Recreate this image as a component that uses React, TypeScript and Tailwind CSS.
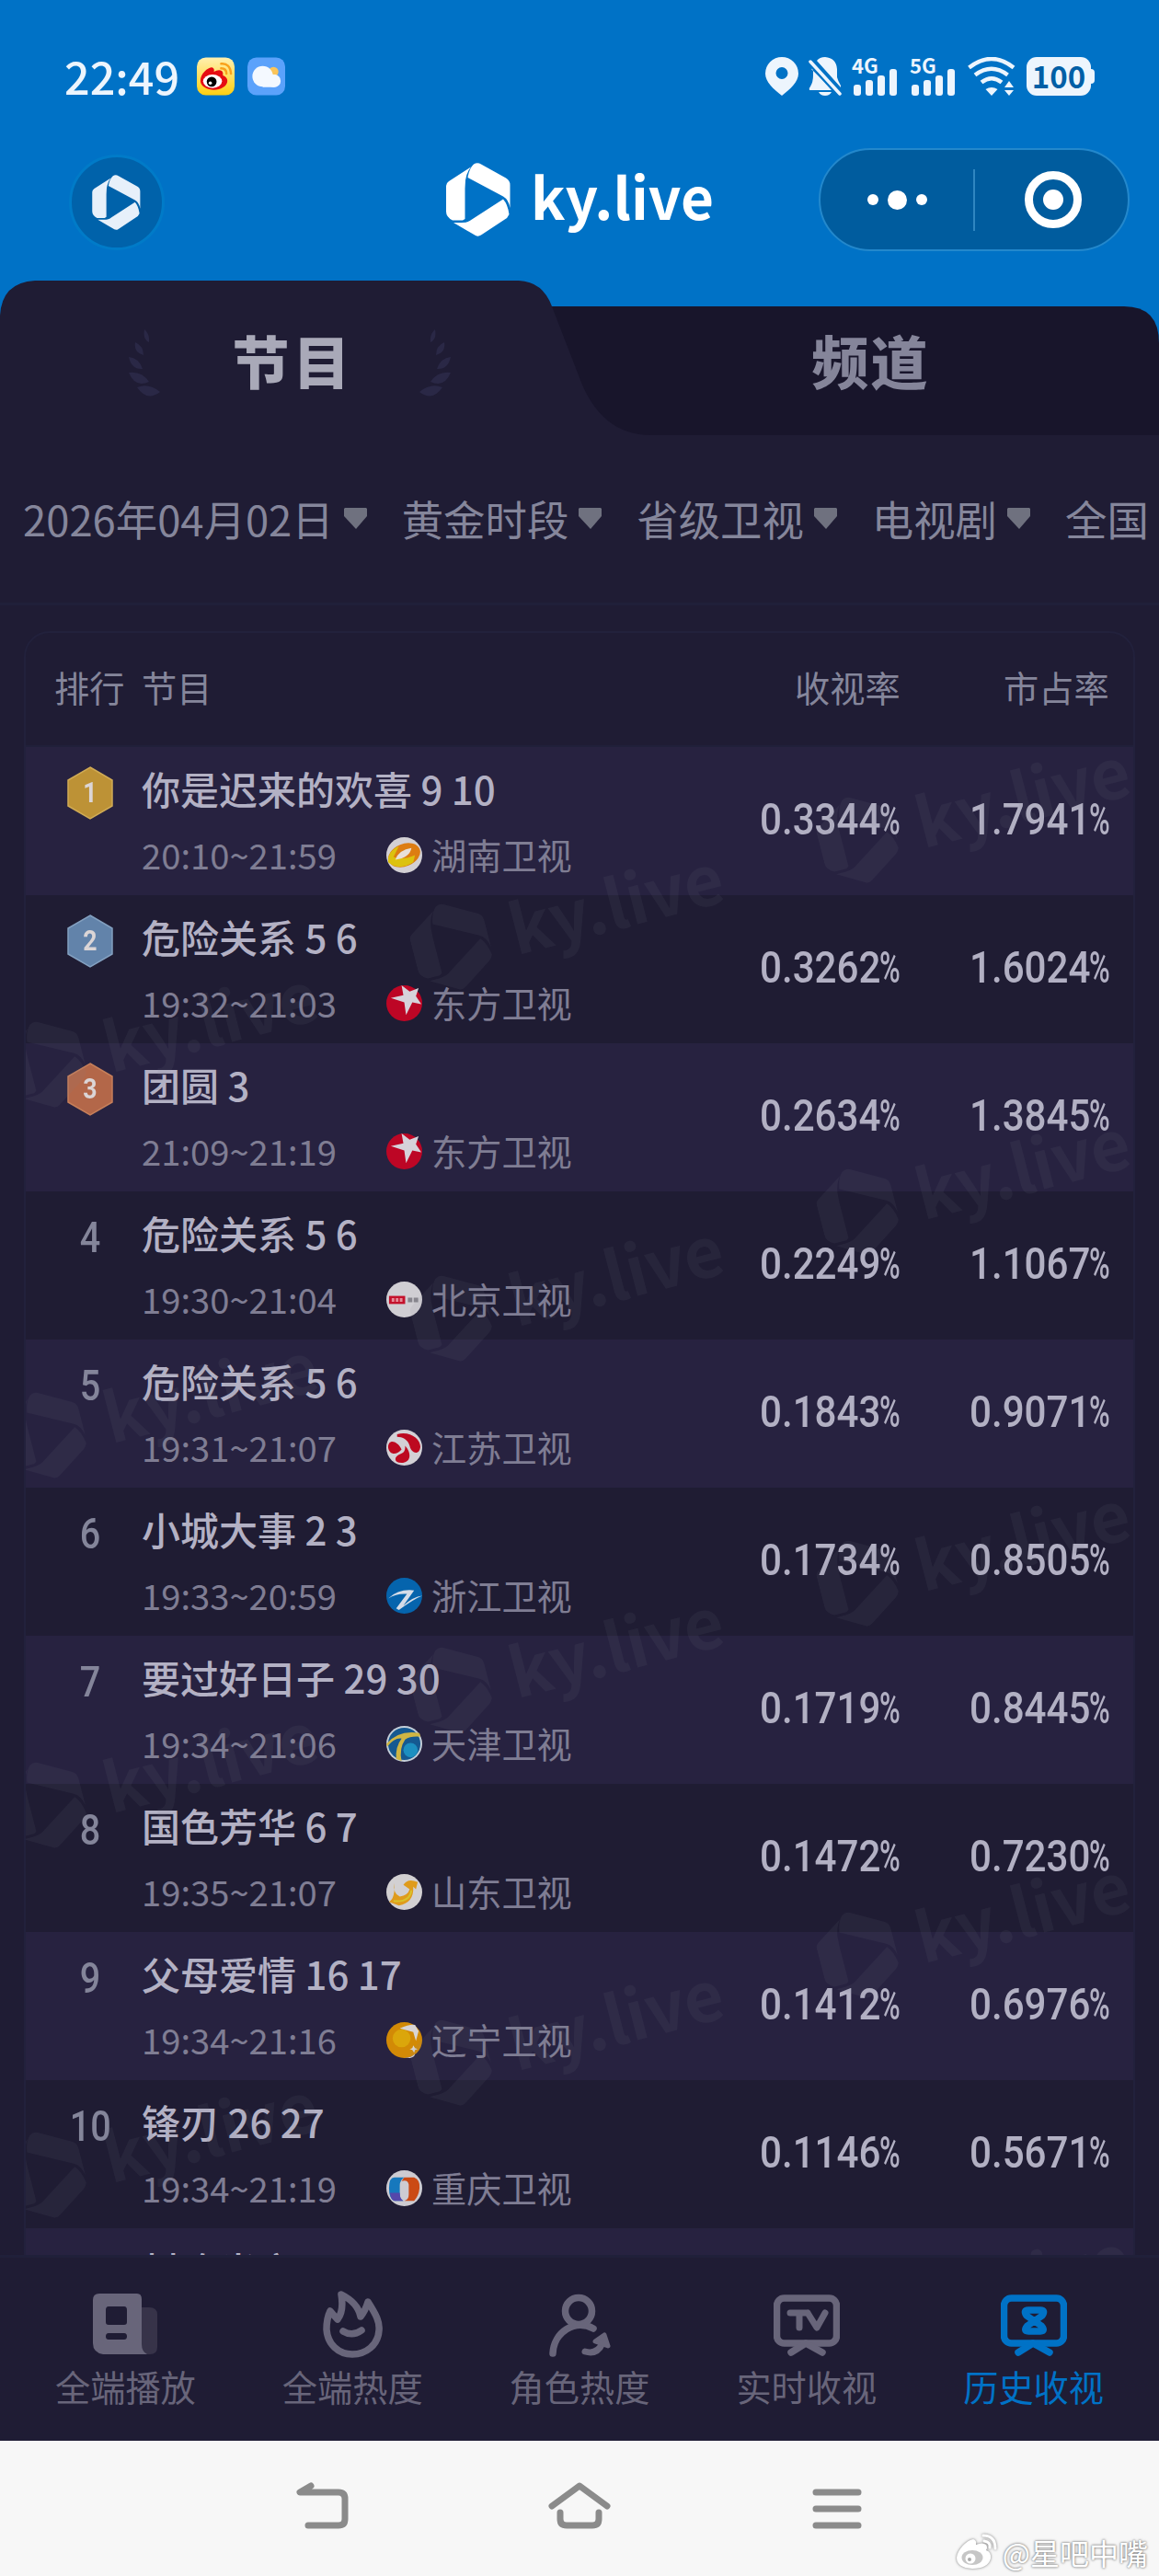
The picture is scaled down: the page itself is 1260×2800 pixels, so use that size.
import type { ReactNode } from 'react';
import clsx from 'clsx';

type Station = 'hunan' | 'dongfang' | 'beijing' | 'jiangsu' | 'zhejiang' | 'tianjin' | 'shandong' | 'liaoning' | 'chongqing';

interface Program {
  rank: number;
  title: string;
  time: string;
  station: Station;
  rating: string;
  share: string;
}

const stationNames: Record<Station, string> = {
  hunan: '湖南卫视',
  dongfang: '东方卫视',
  beijing: '北京卫视',
  jiangsu: '江苏卫视',
  zhejiang: '浙江卫视',
  tianjin: '天津卫视',
  shandong: '山东卫视',
  liaoning: '辽宁卫视',
  chongqing: '重庆卫视',
};

const programs: Program[] = [
  { rank: 1, title: '你是迟来的欢喜 9 10', time: '20:10~21:59', station: 'hunan', rating: '0.3344', share: '1.7941' },
  { rank: 2, title: '危险关系 5 6', time: '19:32~21:03', station: 'dongfang', rating: '0.3262', share: '1.6024' },
  { rank: 3, title: '团圆 3', time: '21:09~21:19', station: 'dongfang', rating: '0.2634', share: '1.3845' },
  { rank: 4, title: '危险关系 5 6', time: '19:30~21:04', station: 'beijing', rating: '0.2249', share: '1.1067' },
  { rank: 5, title: '危险关系 5 6', time: '19:31~21:07', station: 'jiangsu', rating: '0.1843', share: '0.9071' },
  { rank: 6, title: '小城大事 2 3', time: '19:33~20:59', station: 'zhejiang', rating: '0.1734', share: '0.8505' },
  { rank: 7, title: '要过好日子 29 30', time: '19:34~21:06', station: 'tianjin', rating: '0.1719', share: '0.8445' },
  { rank: 8, title: '国色芳华 6 7', time: '19:35~21:07', station: 'shandong', rating: '0.1472', share: '0.7230' },
  { rank: 9, title: '父母爱情 16 17', time: '19:34~21:16', station: 'liaoning', rating: '0.1412', share: '0.6976' },
  { rank: 10, title: '锋刃 26 27', time: '19:34~21:19', station: 'chongqing', rating: '0.1146', share: '0.5671' },
];

const filters = ['2026年04月02日', '黄金时段', '省级卫视', '电视剧', '全国'];

const watermarks = [
  { x: 905, y: 101 }, { x: 463, y: 217 }, { x: 22, y: 345 },
  { x: 905, y: 505 }, { x: 463, y: 621 }, { x: 22, y: 748 },
  { x: 905, y: 909 }, { x: 463, y: 1025 }, { x: 22, y: 1150 },
  { x: 905, y: 1313 }, { x: 463, y: 1430 }, { x: 22, y: 1552 },
  { x: 905, y: 1717 },
];

function Logo({ className }: { className?: string }) {
  return (
    <svg viewBox="0 0 70 80" fill="currentColor" className={className}>
      <path d="M3 20 27 4.5Q22.500 10 21 19L20.500 28V61L18 62.500H7Q0 59 0 53V25Q0 22 3 20Z" />
      <path d="M23.500 16Q25 6 30 1.500Q34-1 38 1.500L65 16.500Q69.500 19 69.500 24V49Q68 40 62 36.500Z" />
      <path d="M62 39.500Q67 45 68.500 56Q67 60 63 62L38 78.500Q35 80.500 32 79L8 65H17Q24 65 28 61.500Z" />
    </svg>
  );
}

function Signal({ label }: { label: string }) {
  return (
    <div className="flex h-[42px] w-[50px] flex-col">
      <div className="h-[13px] text-[22px] leading-[17px] font-bold">{label}</div>
      <svg viewBox="0 0 50 29" className="h-[29px] w-[50px] fill-current">
        <rect x="2" y="17" width="8" height="12" rx="3" />
        <rect x="15" y="12" width="8" height="17" rx="3" />
        <rect x="28" y="7" width="8" height="22" rx="3" />
        <rect x="41" y="0" width="8" height="29" rx="3" />
      </svg>
    </div>
  );
}

function StatusBar() {
  return (
    <div className="flex h-[42px] items-center pr-[70px] pl-[70px] text-[#edf5fd]">
      <div className="w-[144px] pb-[3px] text-[48.500px] leading-[40px] font-medium">22:49</div>
      <svg viewBox="0 0 42 42" className="h-[42px] w-[41px]">
        <defs>
          <linearGradient id="weibo" x1="0" y1="0" x2="0" y2="1">
            <stop offset="0" stopColor="#fff0b0" />
            <stop offset="1" stopColor="#ffcf10" />
          </linearGradient>
        </defs>
        <rect width="42" height="42" rx="10" fill="url(#weibo)" />
        <path d="M4 26C4 18 12 11 17 11q3 1 2 5 5-3 9-1 2 2 1 5 5 2 5 6c0 6-8 10-15 10S4 32 4 26Z" fill="#e60d12" />
        <ellipse cx="17.500" cy="26.500" rx="10.500" ry="7.500" fill="#fff" />
        <circle cx="16.500" cy="27" r="5.500" fill="#000" />
        <circle cx="15" cy="28.500" r="1.800" fill="#fff" />
        <path d="M27 7q10-1 11 11M27 12q6 0 6 6" fill="none" stroke="#f9a11b" strokeWidth="2.500" strokeLinecap="round" />
      </svg>
      <svg viewBox="0 0 42 42" className="ml-3.5 h-[42px] w-[41px]">
        <rect width="42" height="42" rx="10" fill="#5ba2fb" />
        <circle cx="29" cy="16" r="5.500" fill="#fac55a" />
        <circle cx="17" cy="21" r="11.500" fill="#f4f9ff" />
        <path d="M17 19h13a7 7 0 0 1 0 14H17Z" fill="#f4f9ff" />
        <circle cx="29" cy="26" r="7" fill="#f4f9ff" />
      </svg>

      <svg viewBox="0 0 36 42" className="ml-auto h-[42px] w-[36px] fill-current">
        <path fillRule="evenodd" d="M18 0a18 18 0 0 1 18 18c0 9-9 17-18 24C9 35 0 27 0 18A18 18 0 0 1 18 0Zm0 11a6.500 6.500 0 1 0 0 13 6.500 6.500 0 0 0 0-13Z" />
      </svg>
      <svg viewBox="0 0 36 42" className="ml-[11px] h-[42px] w-[36px] fill-current">
        <path d="M9 4Q12 0 18 0q12 1 13 13v9q1 4 4 9v2ZM3 13 27 36H1q-1-2 1-4 3-5 3-12V12ZM11 38h14q-2 4-7 4t-7-4Z" />
        <path d="m2 5 32 35" stroke="#0072c6" strokeWidth="8" />
        <path d="m2 5 32 35" stroke="currentColor" strokeWidth="3.500" strokeLinecap="round" />
      </svg>
      <div className="ml-[11px] flex gap-[13px]">
        <Signal label="4G" />
        <Signal label="5G" />
      </div>
      <svg viewBox="0 0 52 42" className="ml-[13px] h-[42px] w-[52px]" fill="none" stroke="currentColor" strokeWidth="4.500">
        <path d="M1.500 11.500Q26-7.500 50 11.500" />
        <path d="M8 19.500Q26 6 43.500 19.500" />
        <path d="M15 27.500Q26 19 37 27.500" />
        <path d="M19.500 35Q26 31 32.500 35L26 42ZM45 26l5 7H40ZM45 42l5-6H40Z" fill="currentColor" stroke="none" />
      </svg>
      <div className="ml-3 flex items-center">
        <div className="flex h-[42px] w-[70px] items-center justify-center rounded-[11px] bg-[#edf5fd] pb-0.5 text-[33px] leading-none font-bold text-[#005fa6]">100</div>
        <div className="h-4 w-1 rounded-r bg-[#edf5fd]" />
      </div>
    </div>
  );
}

function Header() {
  return (
    <header className="flex h-[305px] flex-col bg-[#0072c6] pt-[62px]">
      <StatusBar />
      <div className="mt-[57px] flex h-[113px] items-start">
        <div className="mt-[7px] ml-[75px] flex size-[104px] items-center justify-center rounded-full border-[3px] border-[#007bc8] bg-[#0062aa] pr-0.5 text-[#e7f0fa]">
          <Logo className="h-[60px] w-[53px]" />
        </div>
        <div className="mt-4 ml-[306px] flex h-20 w-[405px] text-white">
          <Logo className="h-20 w-[70px]" />
          <div className="ml-[22px] text-[62px] leading-[70px] font-bold">ky.live</div>
        </div>
        <div className="flex h-[112px] w-[338px] items-center rounded-full border-2 border-[#2388cc] bg-[#005c9e]">
          <div className="flex w-[166px] items-center justify-center gap-[10px]">
            <div className="size-3 rounded-full bg-white" />
            <div className="size-[21px] rounded-full bg-white" />
            <div className="size-3 rounded-full bg-white" />
          </div>
          <div className="h-[67px] w-0.5 bg-[#2f86c0]" />
          <div className="ml-[54px] flex size-[62px] items-center justify-center rounded-full border-[9px] border-white">
            <div className="size-[22px] rounded-full bg-white" />
          </div>
        </div>
      </div>
    </header>
  );
}

function Laurel({ className }: { className?: string }) {
  return (
    <svg viewBox="0 0 34 74" className={clsx('h-[74px] w-[34px] fill-[#2a2846]', className)}>
      <path d="M17 0q6 5 5 14-7-3-5-14ZM7 14q9 4 9 14Q5 25 7 14ZM0 30q11 1 15 13Q3 44 0 30ZM0 47q14-2 22 10Q7 64 0 47ZM9 63q13-5 25 5Q20 79 9 63Z" />
    </svg>
  );
}

function Tabs() {
  return (
    <div className="relative h-[168px] bg-[#0072c6]">
      <svg viewBox="0 0 1260 168" className="absolute inset-0 h-[168px] w-[1260px]">
        <path d="M580 28H1222Q1260 28 1260 68V168H580Z" fill="#18152b" />
        <path d="M0 168V38Q2 2 38 0H564Q590 1 600 28L629 103Q652 168 708 168Z" fill="#1f1c34" />
      </svg>
      <div className="relative flex h-full pt-[53px] text-[62px] leading-[66px] font-black">
        <div className="flex w-[630px] justify-center text-[#a9a9b8]">
          <Laurel />
          <span className="w-[282px] pl-[7px] text-center tracking-[4px]">节目</span>
          <Laurel className="-scale-x-100" />
        </div>
        <div className="w-[630px] pl-[3px] text-center tracking-[2px] text-[#85859a]">频道</div>
      </div>
    </div>
  );
}

function FilterBar() {
  return (
    <div className="flex h-[185px] items-center gap-[38px] overflow-hidden border-b-3 border-[#20203a] bg-[#1f1c34] pl-[25px] text-[45.400px] whitespace-nowrap text-[#85869b]">
      {filters.map((label) => (
        <div key={label} className="flex shrink-0 items-center gap-[11px]">
          <span className="pb-0.5">{label}</span>
          <svg viewBox="0 0 25 23" className="h-[23px] w-[25px] fill-[#6f717f]">
            <path d="M0 1 1 0H24L25 1V9L13 23 0 9Z" />
          </svg>
        </div>
      ))}
    </div>
  );
}

const badgeFills = ['#bd9236', '#6283aa', '#b36749'];
const badgeEdges = ['#d0ab55', '#83a0c0', '#c67f5a'];

function Rank({ rank }: { rank: number }) {
  if (rank > 3) {
    return (
      <div className="pt-[26px] text-center font-[Roboto,sans-serif] text-[46px] leading-[48px] font-medium text-[#84859a]">
        <span className="inline-block scale-x-[0.86]">{rank}</span>
      </div>
    );
  }
  return (
    <div className="relative mx-auto mt-[21px] flex h-[58px] w-[50px] items-center justify-center">
      <svg viewBox="0 0 50 58" className="absolute inset-0">
        <path d="M25 1 49 15V43L25 57 1 43V15Z" fill={badgeFills[rank - 1]} stroke={badgeEdges[rank - 1]} strokeWidth="1.500" />
      </svg>
      <span className="relative font-[Roboto,sans-serif] text-[31px] leading-none font-bold text-[#dbd5d6]">
        <span className="inline-block scale-x-[0.86]">{rank}</span>
      </span>
    </div>
  );
}

const stationArt: Record<Station, ReactNode> = {
  hunan: (
    <>
      <circle cx="20" cy="20" r="20" fill="#d3d0d4" />
      <ellipse cx="20" cy="20" rx="18.500" ry="12.500" transform="rotate(-22 20 20)" fill="#dd7d12" />
      <path d="M2 28Q1 16 14 10L8 22Q18 26 32 20L30 28Q14 38 2 28Z" fill="#dcc20f" />
      <path d="M10 25Q14 14 28 12 26 23 10 25Z" fill="#e8e0da" />
    </>
  ),
  dongfang: (
    <>
      <circle cx="20" cy="20" r="20" fill="#bd0625" />
      <path d="m17 0 9 7 10-4-3 9 6 9-10-2-7 14-2-14-15-5 14-3Z" fill="#d6d2da" />
    </>
  ),
  beijing: (
    <>
      <circle cx="20" cy="20" r="20" fill="#d0ced3" />
      <rect x="3" y="16" width="18" height="9" fill="#c4112c" />
      <path d="M6 20.500h12" stroke="#e58b98" strokeWidth="4" strokeDasharray="3 1.500" />
      <path d="M24 20.500h12" stroke="#87858d" strokeWidth="5" strokeDasharray="5 1.500" />
    </>
  ),
  jiangsu: (
    <>
      <circle cx="20" cy="20" r="20" fill="#d3d0d5" />
      <path d="M2 20C2 10 12 12 17 22 13 27 4 30 2 20ZM12 5C26 1 38 10 38 19 37 29 28 27 26 18 24 11 18 8 12 8ZM21 18C29 27 27 37 17 37 8 37 8 30 16 27 21 25 21 22 21 18Z" fill="#bd0920" />
    </>
  ),
  zhejiang: (
    <>
      <circle cx="20" cy="20" r="20" fill="#0564ad" />
      <path d="M2 23Q14 12 31 14L19 31Q30 21 40 20 30 24 14 36L11 34 23 18Q12 17 2 23Z" fill="#d4dce8" />
    </>
  ),
  tianjin: (
    <>
      <circle cx="20" cy="20" r="20" fill="#c4cfd9" />
      <circle cx="20" cy="20" r="18" fill="#155991" />
      <circle cx="27" cy="27" r="8" fill="#1c8fc0" />
      <path d="M0 20Q14 4 37 8L38 12Q27 11 21 15 14 25 17 39L11 37Q10 23 17 14 9 13 1 23Z" fill="#cfb543" />
    </>
  ),
  shandong: (
    <>
      <circle cx="20" cy="20" r="20" fill="#d2d0d2" />
      <path d="M9 10Q7 22 15 25 24 24 26 17L19 12Q24 4 35 9L33 17 30 14Q31 32 14 35L3 31Q10 27 9 10Z" fill="#df9b1c" />
      <path d="M8 30Q26 32 28 18" fill="none" stroke="#d8c32b" strokeWidth="2" />
    </>
  ),
  liaoning: (
    <>
      <circle cx="20" cy="20" r="20" fill="#d28a06" />
      <circle cx="17" cy="18" r="10" fill="#dba60b" />
      <path d="M15 7Q26 2 32 3L40 17 36 10 33 21 30 11ZM30 26l2 3 3 1-3 1-1 3-2-3-3-1 3-1ZM20 40q9-1 12-5l-1 3Q27 41 20 40Z" fill="#d9d5d4" />
    </>
  ),
  chongqing: (
    <>
      <circle cx="20" cy="20" r="20" fill="#cdcbd1" />
      <path d="M9 8H20Q15 11 15 17V27Q15 32 19 34H9Q3 32 3 20T9 8Z" fill="#1678bd" />
      <path d="M4 25H15Q15 32 19 34H9Q5 33 4 25Z" fill="#5547aa" />
      <path d="M20 8H31Q38 11 37 20T31 34H20Q25 33 25 27V16Q24 10 17 12Z" fill="#cb4a15" />
    </>
  ),
};

// Condensed figures: Roboto squeezed to a DIN-like width, percent sign narrower still
function Percent({ value, className }: { value: string; className: string }) {
  return (
    <div className={clsx('flex pt-[50px] font-[Roboto,sans-serif] text-[49px] leading-[58px] font-medium text-[#b2b0c3]', className)}>
      <span className="flex w-[130px]">
        <span className="origin-left scale-x-[0.86]">{value}</span>
      </span>
      <span className="flex w-[23px]">
        <span className="origin-left scale-x-[0.63]">%</span>
      </span>
    </div>
  );
}

function ProgramRow({ program, index }: { program: Program; index: number }) {
  return (
    <div className={clsx('flex h-[161px]', index % 2 === 0 ? 'bg-[#272240]' : 'bg-[#1f1c33]')}>
      <div className="w-[80px] pl-[20px]">
        <div className="-mr-[20px] w-[100px]">
          <Rank rank={program.rank} />
        </div>
      </div>
      <div className="w-[718px] pl-[46px]">
        <div className="pt-[15px] text-[42px] leading-[60px] font-medium text-[#b3b1c4]">{program.title}</div>
        <div className="mt-3 flex items-center text-[38.200px] leading-[60px] text-[#7f7d93]">
          <span className="w-[266px]">{program.time}</span>
          <svg viewBox="0 0 40 40" className="mt-0.5 size-[39px]">{stationArt[program.station]}</svg>
          <span className="ml-[10px]">{stationNames[program.station]}</span>
        </div>
      </div>
      <Percent value={program.rating} className="w-[228px]" />
      <Percent value={program.share} className="w-[154px]" />
    </div>
  );
}

function RankingTable() {
  return (
    <div className="h-[1795px] overflow-hidden bg-[#1f1c34] px-[26px] pt-[28px]">
      <div className="overflow-hidden rounded-t-[28px] border-2 border-[#22213c]">
        <div className="flex h-[124px] items-center border-b-2 border-[#20203a] pr-[26px] pb-1 pl-[31px] text-[38.200px] text-[#85869b]">
          <span className="w-[95px]">排行</span>
          <span className="flex-1">节目</span>
          <span className="w-[115px]">收视率</span>
          <span className="ml-[112px] w-[115px]">市占率</span>
        </div>
        <div className="relative overflow-hidden">
          {programs.map((program, i) => (
            <ProgramRow key={program.rank} program={program} index={i} />
          ))}
          <div className="h-[161px] bg-[#272240] pt-[15px] pl-[126px] text-[42px] leading-[60px] font-medium text-[#b3b1c4]">村晚当家</div>
          {watermarks.map((mark) => (
            <div
              key={`${mark.x}-${mark.y}`}
              className="pointer-events-none absolute -mt-[48px] -ml-[42px] flex origin-[42px_48px] -rotate-[14.5deg] text-[#7e8292] opacity-[0.09]"
              style={{ left: mark.x, top: mark.y }}
            >
              <Logo className="h-[96px] w-[84px] shrink-0" />
              <span className="ml-[24px] text-[74px] leading-[86px] font-bold">ky.live</span>
            </div>
          ))}
        </div>
      </div>
    </div>
  );
}

const navItems: { label: string; icon: ReactNode }[] = [
  {
    label: '全端播放',
    icon: (
      <>
        <path d="M54 18H62Q71 18 71 26V61Q71 69 63 69H54Z" fill="#373349" stroke="none" />
        <path fillRule="evenodd" d="M8 3H49Q54 3 54 9V58Q54 66 60 69H12Q1 67 1 57V10Q1 3 8 3ZM18 17Q15 17 15 21V34Q15 37 18 37H35Q38 37 38 34V21Q38 17 35 17ZM18 46Q15 46 15 49.500T18 53H35Q38 53 38 49.500T35 46Z" fill="currentColor" stroke="none" />
      </>
    ),
  },
  {
    label: '全端热度',
    icon: (
      <>
        <path d="M24 4Q42 13 45 28 50 22 53 12C62 26 66 34 65 43 64 59 51 69 36 69S9 58 8 42Q8 30 12 22 16 27 20 31 27 22 24 4Z" />
        <path d="M26 44Q36 50 46 43" />
      </>
    ),
  },
  {
    label: '角色热度',
    icon: (
      <>
        <circle cx="35" cy="22" r="14.500" />
        <path d="M7 68C8 45 31 30 51 41" />
        <path d="M42 66Q55 70 61 57" strokeWidth="7" />
        <path d="m63 48 4 12-14-5Z" fill="currentColor" strokeWidth="5" />
      </>
    ),
  },
  {
    label: '实时收视',
    icon: (
      <>
        <rect x="3.500" y="8" width="65" height="49" rx="8" />
        <path d="M19 67 35 57 53 67" />
        <path d="M18 24H37M28 24V40M37 24 47 40 56 24" strokeWidth="7" />
      </>
    ),
  },
  {
    label: '历史收视',
    icon: (
      <>
        <rect x="3.500" y="8" width="65" height="49" rx="8" />
        <path d="M19 67 35 57 53 67" />
        <path d="M30 21H43Q49 21 45 27L29 38Q24 44 30 44H43Q49 44 44 38L28 27Q24 21 30 21Z" strokeWidth="7.500" />
      </>
    ),
  },
];

function BottomNav() {
  return (
    <nav className="flex h-[202px] border-t-3 border-[#20203a] bg-[#1f1c34] px-[13px] pt-[36px]">
      {navItems.map((item, i) => (
        <div key={item.label} className={clsx('flex flex-1 flex-col items-center', i === 4 ? 'text-[#0072c6]' : 'text-[#68657a]')}>
          <svg viewBox="0 0 72 76" className="h-[76px] w-[72px]" fill="none" stroke="currentColor" strokeWidth="7.500" strokeLinecap="round" strokeLinejoin="round">
            {item.icon}
          </svg>
          <span className="text-[38.200px] leading-[56px]">{item.label}</span>
        </div>
      ))}
    </nav>
  );
}

function SystemBar() {
  return (
    <div className="relative flex h-[147px] bg-[#f7f7f7] pt-[40px] pl-[319px]">
      <svg viewBox="0 0 630 60" className="h-[60px] w-[630px]" fill="none" stroke="#8b8b8b" strokeWidth="7" strokeLinecap="round" strokeLinejoin="round">
        <path d="M19 9 7 16H49Q56 16 56 23V45Q56 52 49 52H16" />
        <path d="M281 31 311 9 341 31M290 38V45Q290 52 297 52H325Q332 52 332 45V38" />
        <path d="M568 16H614M568 34H614M568 52H614" />
      </svg>
      <div className="absolute right-3 bottom-[6px] flex items-center gap-1.5 text-white">
        <svg viewBox="0 0 44 40" className="h-[40px] w-[44px] drop-shadow-[0_0_1.500px_#777]">
          <path d="M0 26C1 17 11 7 18 6q4 1 3 6 7-3 11 0 2 3 0 6 6 2 5 9-3 11-20 11Q0 37 0 26Z" fill="#fff" />
          <ellipse cx="17" cy="26" rx="11.500" ry="8" fill="#c6c6c6" />
          <circle cx="15" cy="27" r="5.500" fill="#fff" />
          <circle cx="14" cy="28" r="2" fill="#aaa" />
          <path d="M29 2q13 0 13 14M30 8q7 1 6 7" fill="none" stroke="#fff" strokeWidth="3" strokeLinecap="round" />
        </svg>
        <span className="text-[32px] leading-[40px] [text-shadow:0_0_3px_#777,0_0_2px_#999]">@星吧中嘴</span>
      </div>
    </div>
  );
}

export default function App() {
  return (
    <div className="flex h-[2800px] w-[1260px] flex-col overflow-hidden bg-[#1f1c34] font-['Noto_Sans_CJK_SC',sans-serif]">
      <Header />
      <Tabs />
      <FilterBar />
      <RankingTable />
      <BottomNav />
      <SystemBar />
    </div>
  );
}
